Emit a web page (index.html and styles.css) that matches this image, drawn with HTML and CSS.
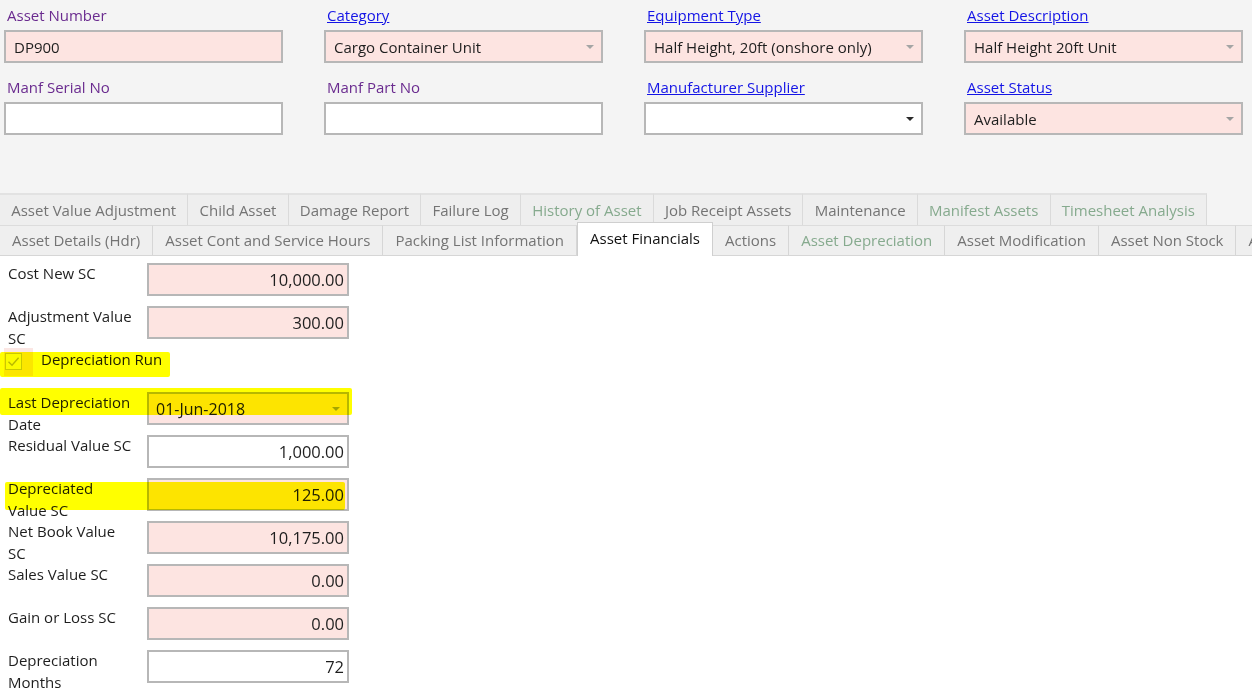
FILE: index.html
```html
<!DOCTYPE html>
<html lang="en">
<head>
    <meta charset="UTF-8">
    <title>Asset Financials</title>
    <link rel="stylesheet" href="styles.css">
</head>
<body>
    <div class="header">
        <div class="field-grid">
            <div class="field">
                <span class="lbl">Asset Number</span>
                <div class="box req">DP900</div>
            </div>
            <div class="field">
                <a class="lbl link">Category</a>
                <div class="box req combo">Cargo Container Unit<span class="arrow"></span></div>
            </div>
            <div class="field">
                <a class="lbl link">Equipment Type</a>
                <div class="box req combo">Half Height, 20ft (onshore only)<span class="arrow"></span></div>
            </div>
            <div class="field">
                <a class="lbl link">Asset Description</a>
                <div class="box req combo">Half Height 20ft Unit<span class="arrow"></span></div>
            </div>
            <div class="field">
                <span class="lbl">Manf Serial No</span>
                <div class="box"></div>
            </div>
            <div class="field">
                <span class="lbl">Manf Part No</span>
                <div class="box"></div>
            </div>
            <div class="field">
                <a class="lbl link">Manufacturer Supplier</a>
                <div class="box combo"><span></span><span class="arrow dark"></span></div>
            </div>
            <div class="field">
                <a class="lbl link">Asset Status</a>
                <div class="box req combo">Available<span class="arrow"></span></div>
            </div>
        </div>
    </div>

    <div class="tabs">
        <div class="tab-row back">
            <div class="tab">Asset Value Adjustment</div>
            <div class="tab">Child Asset</div>
            <div class="tab">Damage Report</div>
            <div class="tab">Failure Log</div>
            <div class="tab green">History of Asset</div>
            <div class="tab">Job Receipt Assets</div>
            <div class="tab">Maintenance</div>
            <div class="tab green">Manifest Assets</div>
            <div class="tab green">Timesheet Analysis</div>
        </div>
        <div class="tab-row front">
            <div class="tab">Asset Details (Hdr)</div>
            <div class="tab">Asset Cont and Service Hours</div>
            <div class="tab">Packing List Information</div>
            <div class="tab active">Asset Financials</div>
            <div class="tab">Actions</div>
            <div class="tab green">Asset Depreciation</div>
            <div class="tab">Asset Modification</div>
            <div class="tab">Asset Non Stock</div>
            <div class="tab">A</div>
        </div>
    </div>

    <div class="panel">
        <div class="row">
            <div class="cap">Cost New SC</div>
            <div class="box req num">10,000.00</div>
        </div>
        <div class="row">
            <div class="cap">Adjustment Value<br>SC</div>
            <div class="box req num">300.00</div>
        </div>
        <div class="row check-row">
            <span class="check-focus"></span>
            <span class="checkbox">
                <svg width="17" height="17" viewBox="0 0 17 17">
                    <rect x="0.5" y="0.5" width="16" height="16" fill="#fbfbfb" stroke="#c9c9c9"/>
                    <path d="M3.5 8.8 L7 12.2 L13.6 4.8" fill="none" stroke="#b8b8b8" stroke-width="1.4"/>
                </svg>
            </span>
            <span class="check-text">Depreciation Run</span>
            <span class="mark mark-check"></span>
        </div>
        <div class="row">
            <div class="cap">Last Depreciation<br>Date</div>
            <div class="box req combo big">01-Jun-2018<span class="arrow"></span></div>
            <span class="mark mark-date"></span>
        </div>
        <div class="row">
            <div class="cap">Residual Value SC</div>
            <div class="box num">1,000.00</div>
        </div>
        <div class="row">
            <div class="cap">Depreciated<br>Value SC</div>
            <div class="box req num">125.00</div>
            <span class="mark mark-dep"></span>
        </div>
        <div class="row">
            <div class="cap">Net Book Value<br>SC</div>
            <div class="box req num">10,175.00</div>
        </div>
        <div class="row">
            <div class="cap">Sales Value SC</div>
            <div class="box req num">0.00</div>
        </div>
        <div class="row">
            <div class="cap">Gain or Loss SC</div>
            <div class="box req num">0.00</div>
        </div>
        <div class="row">
            <div class="cap">Depreciation<br>Months</div>
            <div class="box num">72</div>
        </div>
        <div class="row">
            <div class="cap"></div>
            <div class="box req num"></div>
        </div>
    </div>
</body>
</html>
```

FILE: styles.css
```css
body {
    margin: 0;
    font-family: "Open Sans", "Noto Sans", Arial, sans-serif;
    font-size: 15px;
    color: #1e1e1e;
    background-color: white;
    overflow: hidden;
}
.header {
    height: 193px;
    box-sizing: border-box;
    padding: 5px 0 0 4px;
    background-color: #f4f4f4;
}
.field-grid {
    display: grid;
    grid-template-columns: repeat(4, 279px);
    column-gap: 41px;
    row-gap: 14px;
}
.field {
    display: flex;
    flex-direction: column;
}
.lbl {
    align-self: flex-start;
    line-height: 20px;
    margin: 0 0 5px 3px;
    color: #6a2b8f;
}
.lbl.link {
    color: #1414e6;
    text-decoration: underline;
    cursor: pointer;
}
.box {
    height: 33px;
    box-sizing: border-box;
    border: 2px solid #b7b7b7;
    background-color: white;
    padding: 0 8px;
    display: flex;
    align-items: center;
    color: #1e1e1e;
    white-space: nowrap;
}
.box.req {
    background-color: #fde4e1;
}
.box.combo {
    justify-content: space-between;
    padding-right: 7px;
}
.arrow {
    width: 0;
    height: 0;
    border-left: 4px solid transparent;
    border-right: 4px solid transparent;
    border-top: 4px solid #a5a5a5;
}
.arrow.dark {
    border-top-color: #2a2a2a;
}

.tabs {
    background-color: #f4f4f4;
}
.tab-row {
    display: flex;
    white-space: nowrap;
    overflow: hidden;
}
.tab-row.back {
    width: 1210px;
    height: 32px;
}
.tab-row.back .tab {
    height: 32px;
    line-height: 30px;
    padding: 0 11.2px;
    background-color: #eeeeee;
    border-top: 2px solid #e2e2e2;
    border-right: 1px solid #dadada;
}
.tab-row.front {
    height: 30px;
    border-bottom: 1px solid #d6d6d6;
    overflow: visible;
}
.tab-row.front .tab {
    height: 30px;
    line-height: 29px;
    padding: 0 12px;
    background-color: #efefef;
    border-top: 1px solid #dcdcdc;
    border-right: 1px solid #d6d6d6;
}
.tab {
    box-sizing: border-box;
    color: #747474;
    flex-shrink: 0;
}
.tab.green {
    color: #86aa8e;
}
.tab-row.front .tab.active {
    position: relative;
    height: 34px;
    margin-top: -3px;
    line-height: 31px;
    padding: 0 12px;
    background-color: white;
    border: 1px solid #cfcfcf;
    border-bottom: none;
    color: #111;
}

.panel {
    display: flex;
    flex-direction: column;
    gap: 10px;
    padding-top: 7px;
}
.row {
    position: relative;
    display: grid;
    grid-template-columns: 147px 202px;
    height: 33px;
}
.cap {
    padding-left: 8px;
    line-height: 22px;
    margin-top: -1px;
    color: #1e1e1e;
    white-space: nowrap;
}
.box.num {
    justify-content: flex-end;
    padding-right: 3px;
    font-size: 16.5px;
}
.box.big {
    font-size: 16px;
    padding-left: 7px;
}
.check-row {
    display: flex;
    align-items: flex-start;
}
.check-focus {
    position: absolute;
    left: 4px;
    top: -1px;
    width: 29px;
    height: 28px;
    background-color: #fbe6e3;
}
.checkbox {
    position: relative;
    margin: 4px 0 0 5px;
    height: 17px;
}
.check-text {
    position: relative;
    margin-left: 19px;
    line-height: 22px;
    margin-top: -1px;
}
.mark {
    position: absolute;
    background-color: #ffff00;
    mix-blend-mode: multiply;
    border-radius: 2px;
}
.mark-check {
    left: 0;
    top: 3px;
    width: 170px;
    height: 25px;
}
.mark-date {
    left: 0;
    top: -4px;
    width: 352px;
    height: 27px;
}
.mark-dep {
    left: 5px;
    top: 4px;
    width: 340px;
    height: 28px;
}
```
